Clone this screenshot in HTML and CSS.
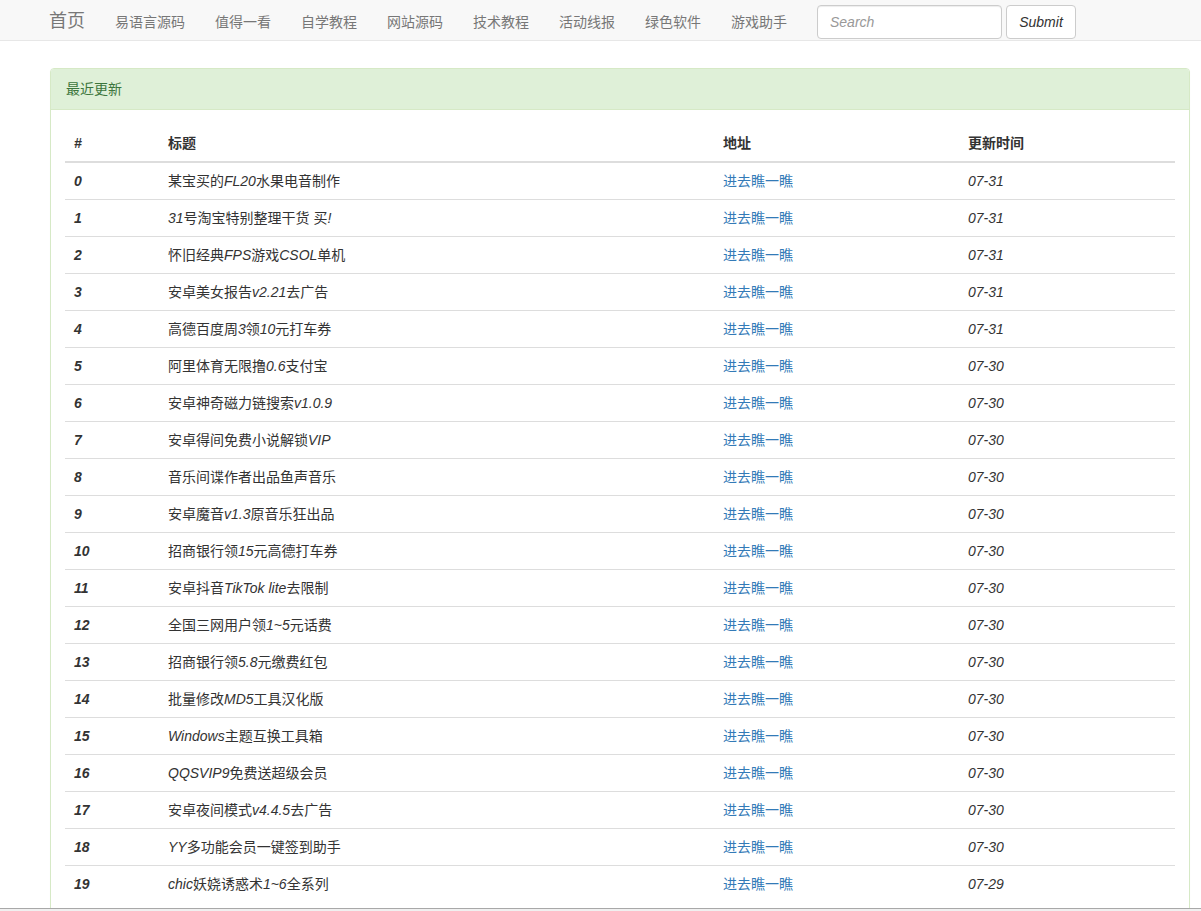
FILE: index.html
```html
<!DOCTYPE html>
<html lang="zh-CN">
<head>
<meta charset="utf-8">
<title>最近更新</title>
<link rel="stylesheet" href="styles.css">
</head>
<body>
<nav class="navbar">
  <div class="navbar-inner">
    <a class="brand" href="#">首页</a>
    <ul class="nav">
      <li><a href="#">易语言源码</a></li>
      <li><a href="#">值得一看</a></li>
      <li><a href="#">自学教程</a></li>
      <li><a href="#">网站源码</a></li>
      <li><a href="#">技术教程</a></li>
      <li><a href="#">活动线报</a></li>
      <li><a href="#">绿色软件</a></li>
      <li><a href="#">游戏助手</a></li>
    </ul>
    <form class="search-form">
      <input class="search-input" type="text" placeholder="Search">
      <button class="search-btn" type="button">Submit</button>
    </form>
  </div>
</nav>
<main class="page">
  <section class="panel">
    <div class="panel-heading">最近更新</div>
    <div class="panel-body">
      <table class="list">
        <colgroup>
          <col class="c-num"><col class="c-title"><col class="c-link"><col class="c-date">
        </colgroup>
        <thead>
          <tr><th class="hash">#</th><th>标题</th><th>地址</th><th>更新时间</th></tr>
        </thead>
        <tbody>
          <tr><td class="num">0</td><td>某宝买的FL20水果电音制作</td><td><a href="#">进去瞧一瞧</a></td><td>07-31</td></tr>
          <tr><td class="num">1</td><td>31号淘宝特别整理干货 买!</td><td><a href="#">进去瞧一瞧</a></td><td>07-31</td></tr>
          <tr><td class="num">2</td><td>怀旧经典FPS游戏CSOL单机</td><td><a href="#">进去瞧一瞧</a></td><td>07-31</td></tr>
          <tr><td class="num">3</td><td>安卓美女报告v2.21去广告</td><td><a href="#">进去瞧一瞧</a></td><td>07-31</td></tr>
          <tr><td class="num">4</td><td>高德百度周3领10元打车券</td><td><a href="#">进去瞧一瞧</a></td><td>07-31</td></tr>
          <tr><td class="num">5</td><td>阿里体育无限撸0.6支付宝</td><td><a href="#">进去瞧一瞧</a></td><td>07-30</td></tr>
          <tr><td class="num">6</td><td>安卓神奇磁力链搜索v1.0.9</td><td><a href="#">进去瞧一瞧</a></td><td>07-30</td></tr>
          <tr><td class="num">7</td><td>安卓得间免费小说解锁VIP</td><td><a href="#">进去瞧一瞧</a></td><td>07-30</td></tr>
          <tr><td class="num">8</td><td>音乐间谍作者出品鱼声音乐</td><td><a href="#">进去瞧一瞧</a></td><td>07-30</td></tr>
          <tr><td class="num">9</td><td>安卓魔音v1.3原音乐狂出品</td><td><a href="#">进去瞧一瞧</a></td><td>07-30</td></tr>
          <tr><td class="num">10</td><td>招商银行领15元高德打车券</td><td><a href="#">进去瞧一瞧</a></td><td>07-30</td></tr>
          <tr><td class="num">11</td><td>安卓抖音TikTok lite去限制</td><td><a href="#">进去瞧一瞧</a></td><td>07-30</td></tr>
          <tr><td class="num">12</td><td>全国三网用户领1~5元话费</td><td><a href="#">进去瞧一瞧</a></td><td>07-30</td></tr>
          <tr><td class="num">13</td><td>招商银行领5.8元缴费红包</td><td><a href="#">进去瞧一瞧</a></td><td>07-30</td></tr>
          <tr><td class="num">14</td><td>批量修改MD5工具汉化版</td><td><a href="#">进去瞧一瞧</a></td><td>07-30</td></tr>
          <tr><td class="num">15</td><td>Windows主题互换工具箱</td><td><a href="#">进去瞧一瞧</a></td><td>07-30</td></tr>
          <tr><td class="num">16</td><td>QQSVIP9免费送超级会员</td><td><a href="#">进去瞧一瞧</a></td><td>07-30</td></tr>
          <tr><td class="num">17</td><td>安卓夜间模式v4.4.5去广告</td><td><a href="#">进去瞧一瞧</a></td><td>07-30</td></tr>
          <tr><td class="num">18</td><td>YY多功能会员一键签到助手</td><td><a href="#">进去瞧一瞧</a></td><td>07-30</td></tr>
          <tr><td class="num">19</td><td>chic妖娆诱惑术1~6全系列</td><td><a href="#">进去瞧一瞧</a></td><td>07-29</td></tr>
        </tbody>
      </table>
    </div>
  </section>
</main>
<div class="bottom-bar"></div>
</body>
</html>
```

FILE: styles.css
```css
* { box-sizing: border-box; }

html, body {
  margin: 0;
  padding: 0;
}

body {
  font-family: "Liberation Sans", Arial, "Noto Sans CJK SC", sans-serif;
  font-size: 14px;
  line-height: 20px;
  color: #333;
  background: #fff;
  font-synthesis: none;
}

a { text-decoration: none; }

.navbar {
  background: #f8f8f8;
  border-bottom: 1px solid #e7e7e7;
  height: 41px;
}

.navbar-inner {
  display: flex;
  align-items: center;
  height: 40px;
  padding-left: 34px;
}

.brand {
  display: block;
  padding: 0 15px;
  font-size: 18px;
  line-height: 20px;
  color: #777;
  margin-top: 1px;
}

.nav {
  display: flex;
  list-style: none;
  margin: 0;
  padding: 0;
}

.nav a {
  display: block;
  padding: 0 15px;
  color: #777;
  line-height: 20px;
  margin-top: 3px;
}

.search-form {
  display: flex;
  gap: 4px;
  margin-left: 15px;
  margin-top: 3px;
}

.search-input {
  width: 185px;
  height: 34px;
  padding: 6px 12px;
  font: italic 14px "Liberation Sans", Arial, sans-serif;
  color: #555;
  border: 1px solid #ccc;
  border-radius: 4px;
  box-shadow: inset 0 1px 1px rgba(0,0,0,.075);
  background: #fff;
}

.search-input::placeholder { color: #999; }

.search-btn {
  width: 70px;
  height: 34px;
  padding: 6px 12px;
  font: italic 14px "Liberation Sans", Arial, sans-serif;
  color: #333;
  background: #fff;
  border: 1px solid #ccc;
  border-radius: 4px;
}

.page {
  padding: 27px 11px 0 50px;
}

.panel {
  width: 1140px;
  border: 1px solid #d6e9c6;
  border-radius: 4px;
  background: #fff;
  box-shadow: 0 1px 1px rgba(0,0,0,.05);
}

.panel-heading {
  background: #dff0d8;
  color: #3c763d;
  padding: 10px 15px;
  border-bottom: 1px solid #d6e9c6;
  border-radius: 3px 3px 0 0;
}

.panel-body {
  padding: 15px 14px 15px 14px;
}

.list {
  width: 100%;
  border-collapse: collapse;
  border-spacing: 0;
  table-layout: fixed;
}

.c-num { width: 94px; }
.c-title { width: 555px; }
.c-link { width: 245px; }
.c-date { width: 216px; }

.list th {
  text-align: left;
  font-weight: bold;
  padding: 8px 8px 8px 9px;
  border-bottom: 2px solid #ddd;
  font-style: normal;
}

.list th.hash { font-style: italic; }

.list td {
  padding: 8px 8px 8px 9px;
  border-top: 1px solid #ddd;
  font-style: italic;
  white-space: nowrap;
}

.list td.num { font-weight: bold; }

.list td a { color: #337ab7; }

.bottom-bar {
  position: fixed;
  left: 0;
  right: 0;
  bottom: 0;
  height: 3px;
  background: #f0f0f0;
  border-top: 1px solid #a8a8a8;
}
```
